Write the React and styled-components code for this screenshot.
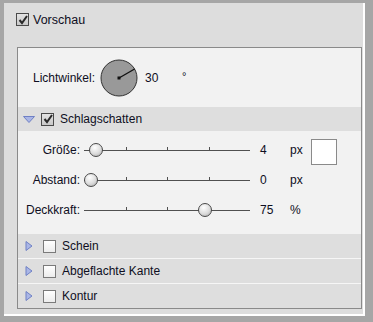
import React from 'react';
import styled, { createGlobalStyle } from 'styled-components';

const GlobalStyle = createGlobalStyle`
  html, body {
    margin: 0;
    padding: 0;
    background: #a6a6a6;
  }
  body {
    font-family: "Liberation Sans", Arial, sans-serif;
    font-size: 12px;
    color: #0e0e22;
  }
`;

const Frame = styled.div`
  width: 373px;
  height: 322px;
  box-sizing: border-box;
  background: #a6a6a6;
  padding: 3px 8px 6px 4px;
`;

const Body = styled.div`
  height: 100%;
  box-sizing: border-box;
  background: #dddddd;
  border-right: 2px solid #ffffff;
  border-bottom: 2px solid #ffffff;
  display: flex;
  flex-direction: column;
  padding: 0 1px 6px 13px;
`;

const TopRow = styled.label`
  height: 44px;
  flex-shrink: 0;
  box-sizing: border-box;
  display: flex;
  align-items: flex-start;
  gap: 4px;
  padding-top: 10px;
  margin-left: -1px;
  font-size: 12.5px;
  line-height: 14px;
`;

const Panel = styled.div`
  flex: 1;
  border: 1px solid #8a8a8a;
  background: #f2f2f2;
  display: flex;
  flex-direction: column;
`;

const AngleRow = styled.div`
  height: 59px;
  flex-shrink: 0;
  display: flex;
  align-items: center;
  padding-left: 15px;
`;

const Label = styled.span`
  margin-right: 5px;
`;

const Value = styled.span`
  margin-left: 7px;
  width: 37px;
`;

const Degree = styled.span`
  font-size: 11px;
  margin-top: -4px;
`;

const SectionHead = styled.div`
  height: 24px;
  flex-shrink: 0;
  display: flex;
  align-items: center;
  gap: 6px;
  padding-left: ${p => (p.$open ? 5 : 7)}px;
  background: #dedede;
  border-top: ${p => (p.$divider ? '1px solid #f6f6f6' : 'none')};
`;

const Arrow = styled.svg`
  width: ${p => (p.$open ? 12 : 8)}px;
  height: 10px;
  margin-right: ${p => (p.$open ? 0 : 4)}px;
`;

const Box = styled.span`
  width: 11px;
  height: 11px;
  flex-shrink: 0;
  border: 1px solid ${p => (p.$checked ? '#4a4a4a' : '#7a7a7a')};
  background: ${p => (p.$checked ? 'linear-gradient(#e4e4e4, #c8c8c8)' : 'linear-gradient(#ffffff, #ececec)')};
  display: flex;
  align-items: center;
  justify-content: center;
`;

const SliderArea = styled.div`
  padding: 4px 0 9px 0;
  display: flex;
  flex-direction: column;
`;

const SliderRow = styled.div`
  height: 30px;
  display: grid;
  grid-template-columns: 64px 168px 40px 21px 26px;
  align-items: center;
`;

const RowLabel = styled.span`
  text-align: right;
  padding-right: 2px;
  margin-left: 2px;
`;

const Track = styled.div`
  position: relative;
  height: 14px;
  margin-left: 2px;
  &::before {
    content: '';
    position: absolute;
    left: 0;
    right: 0;
    top: 7px;
    height: 1px;
    background: #505050;
  }
`;

const Tick = styled.span`
  position: absolute;
  top: 4px;
  width: 1px;
  height: 3px;
  background: #505050;
`;

const Thumb = styled.span`
  position: absolute;
  top: 0;
  width: 12px;
  height: 12px;
  border-radius: 50%;
  border: 1px solid #4a4a4a;
  background: radial-gradient(circle at 40% 30%, #ffffff 0%, #dcdcdc 55%, #a8a8a8 100%);
`;

const Num = styled.span`
  padding-left: 10px;
`;

const Swatch = styled.span`
  width: 24px;
  height: 24px;
  border: 1px solid #8a8a8a;
  background: #ffffff;
  margin-top: 4px;
`;

const Filler = styled.div`
  flex: 1;
  background: #dedede;
`;

function Check({ checked }) {
  return (
    <Box $checked={checked}>
      {checked && (
        <svg width="10" height="10" viewBox="0 0 10 10">
          <path d="M1.5 5 L4 8 L9 1" fill="none" stroke="#2a2a2a" strokeWidth="2" />
        </svg>
      )}
    </Box>
  );
}

function Triangle({ open }) {
  return open ? (
    <Arrow $open viewBox="0 0 12 10">
      <path d="M0.5 2.5 L11.5 2.5 L6 8.5 Z" fill="#aab6e6" stroke="#6f80c4" strokeWidth="1" />
    </Arrow>
  ) : (
    <Arrow viewBox="0 0 8 10">
      <path d="M1 0.5 L7 5 L1 9.5 Z" fill="#aab6e6" stroke="#6f80c4" strokeWidth="1" />
    </Arrow>
  );
}

function Dial({ angle }) {
  const r = 18;
  const rad = (angle * Math.PI) / 180;
  const x = 19 + Math.cos(rad) * r;
  const y = 19 - Math.sin(rad) * r;
  return (
    <svg width="38" height="38" viewBox="0 0 38 38">
      <circle cx="19" cy="19" r="18" fill="#999999" stroke="#333333" strokeWidth="1" />
      <line x1="19" y1="19" x2={x} y2={y} stroke="#111111" strokeWidth="1.4" />
      <rect x="17.5" y="17.5" width="3" height="3" fill="#111111" />
    </svg>
  );
}

function Slider({ pos }) {
  return (
    <Track>
      {[25, 50, 75].map(t => (
        <Tick key={t} style={{ left: `${t}%` }} />
      ))}
      <Thumb style={{ left: `calc(${pos}% - 7px)` }} />
    </Track>
  );
}

const sliders = [
  { label: 'Größe:', pos: 7.5, value: '4', unit: 'px', swatch: true },
  { label: 'Abstand:', pos: 4, value: '0', unit: 'px' },
  { label: 'Deckkraft:', pos: 73, value: '75', unit: '%' },
];

const sections = ['Schein', 'Abgeflachte Kante', 'Kontur'];

export default function App() {
  return (
    <>
      <GlobalStyle />
      <Frame>
        <Body>
          <TopRow>
            <Check checked />
            <span>Vorschau</span>
          </TopRow>
          <Panel>
            <AngleRow>
              <Label>Lichtwinkel:</Label>
              <Dial angle={30} />
              <Value>30</Value>
              <Degree>°</Degree>
            </AngleRow>
            <SectionHead $open>
              <Triangle open />
              <Check checked />
              <span>Schlagschatten</span>
            </SectionHead>
            <SliderArea>
              {sliders.map(s => (
                <SliderRow key={s.label}>
                  <RowLabel>{s.label}</RowLabel>
                  <Slider pos={s.pos} />
                  <Num>{s.value}</Num>
                  <span>{s.unit}</span>
                  {s.swatch ? <Swatch /> : <span />}
                </SliderRow>
              ))}
            </SliderArea>
            {sections.map((name, i) => (
              <SectionHead key={name} $divider={i > 0}>
                <Triangle />
                <Check />
                <span>{name}</span>
              </SectionHead>
            ))}
            <Filler />
          </Panel>
        </Body>
      </Frame>
    </>
  );
}
